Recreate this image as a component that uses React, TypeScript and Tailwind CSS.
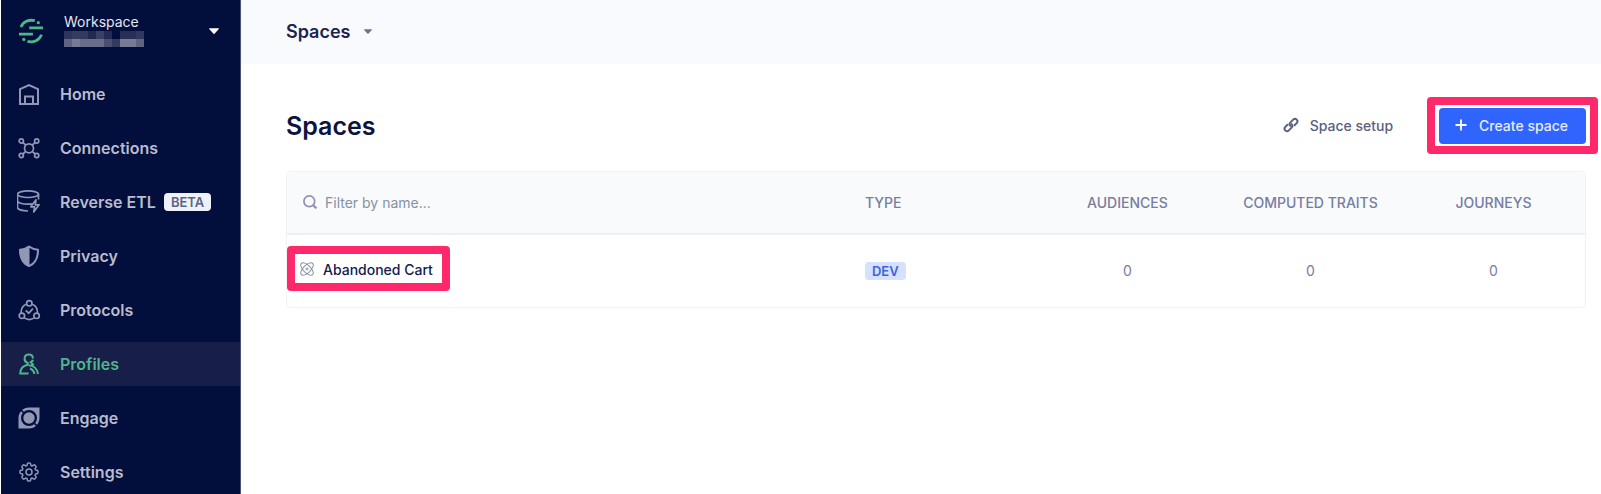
import type { ReactNode } from "react";
import { clsx } from "clsx";
import { HiOutlineCog8Tooth } from "react-icons/hi2";

type NavItem = {
  label: string;
  icon: ReactNode;
  badge?: string;
  active?: boolean;
};

const ICON_CLS = "size-6 shrink-0";

function NavIcon({ children }: { children: ReactNode }) {
  return (
    <svg
      viewBox="0 0 24 24"
      className={ICON_CLS}
      fill="none"
      stroke="currentColor"
      strokeWidth="1.7"
      aria-hidden="true"
    >
      {children}
    </svg>
  );
}

const NAV_ITEMS: NavItem[] = [
  {
    label: "Home",
    icon: (
      <NavIcon>
        <path strokeWidth="2" d="M3 22V7.200L12 3l9 4.200V22zM8 22v-7.500h8V22" />
      </NavIcon>
    ),
  },
  {
    label: "Connections",
    icon: (
      <NavIcon>
        <circle cx="12" cy="12.300" r="4.500" />
        <circle cx="4.300" cy="5" r="2.100" />
        <circle cx="19.700" cy="5" r="2.100" />
        <circle cx="4.300" cy="19.500" r="2.100" />
        <circle cx="19.700" cy="19.500" r="2.100" />
        <path d="M5.800 6.500l3.100 2.700M18.200 6.500l-3.100 2.700M5.800 18l3.100-2.600M18.200 18l-3.100-2.600" />
      </NavIcon>
    ),
  },
  {
    label: "Reverse ETL",
    badge: "BETA",
    icon: (
      <NavIcon>
        <ellipse cx="11" cy="4.200" rx="10.500" ry="3.300" />
        <path d="M.5 4.200v13.300c0 1.900 4.500 3.400 10.500 3.500M21.500 4.200v5.300M.5 10.800c0 1.900 4.700 3.400 10.500 3.400 1.600 0 3-.1 4.300-.4" />
        <path strokeLinejoin="round" d="M19 9.800l-5.200 7h3.800l-.9 5.200 5.400-7.200h-3.800z" />
      </NavIcon>
    ),
  },
  {
    label: "Privacy",
    icon: (
      <NavIcon>
        <path
          strokeWidth="2"
          strokeLinejoin="round"
          d="M12 2.500c2.600 1.900 5.500 3 9 3.200.1 8-2.600 13.800-9 16.500-6.400-2.700-9.100-8.500-9-16.500 3.500-.2 6.400-1.300 9-3.200z"
        />
        <path
          fill="currentColor"
          stroke="none"
          d="M12.500 2.500v19.700C5.600 19.500 2.900 13.700 3 5.700c3.500-.2 6.400-1.300 9.500-3.200z"
        />
      </NavIcon>
    ),
  },
  {
    label: "Protocols",
    icon: (
      <NavIcon>
        <circle cx="12.300" cy="5.300" r="2.700" />
        <circle cx="4.900" cy="17.800" r="2.700" />
        <circle cx="19.600" cy="17.800" r="2.700" />
        <path d="M9.600 6.200C6 7.300 4 10.800 4.100 15.100M15 6.200c3.600 1.100 5.600 4.600 5.500 8.900M7.100 19.900c3.300 2.100 7 2.100 10.300 0" />
        <path d="M8.700 12.400l3 2.800 4.200-4.600" />
      </NavIcon>
    ),
  },
  {
    label: "Profiles",
    active: true,
    icon: (
      <NavIcon>
        <path strokeWidth="2" d="M10.300 10.600C6.600 9.500 6.300 2.700 11.700 2.600c2.500 0 4.200 1.500 4.200 4" />
        <path strokeWidth="2" d="M11.600 21.400H3.300c.1-4.800 2.600-7.800 7.400-8.700V9.900" />
        <path strokeWidth="2" d="M12.600 10.400c1.800-.1 3-1.100 3.300-2.600M11.500 13.300c5 .2 8.800 3.400 9.500 8.700M13 16.500c2.400.8 3.900 2.700 4.400 5.500M14.100 11.400c1 .2 2 .9 2.500 1.900" />
      </NavIcon>
    ),
  },
  {
    label: "Engage",
    icon: (
      <NavIcon>
        <circle cx="12" cy="12" r="5.700" fill="currentColor" stroke="none" />
        <path
          fill="currentColor"
          stroke="none"
          fillRule="evenodd"
          d="M12 1.500h10.500V12c0 5.800-4.500 10.500-10.500 10.500H1.500V12C1.500 6.200 6.200 1.500 12 1.500zM12 4a8 8 0 1 0 0 16 8 8 0 0 0 0-16z"
        />
        <path stroke="#020e3c" strokeWidth="1.600" d="M4.200 4.200l2.400 2.400M17.400 17.400l2.400 2.400" />
      </NavIcon>
    ),
  },
  {
    label: "Settings",
    icon: <HiOutlineCog8Tooth className={ICON_CLS} aria-hidden="true" />,
  },
];

const SPACES = [
  { name: "Abandoned Cart", type: "DEV", audiences: 0, traits: 0, journeys: 0 },
];

/* Blurred-out workspace slug, two rows of blocks */
const MASK_ROWS = [
  ["#2e3559", "#363c60", "#343a5e", "#20294f", "#3a4064", "#232b52", "#020e3c", "#262f56", "#262f56", "#313961"],
  ["#5f6482", "#777b94", "#686d89", "#686d89", "#686d89", "#484f70", "#343b60", "#777b94", "#777b94", "#5f6482"],
];

function Logo() {
  return (
    <svg viewBox="0 0 26 26" className="size-[26px] shrink-0" fill="none" stroke="#4fb58b" strokeWidth="2.800" aria-hidden="true">
      <path d="M3 9C5 3.600 10.800 1.200 16.800 2.700" />
      <path d="M23.500 16.600c-2 5.700-8 8.300-14 6.800" />
      <path d="M11.200 9.800H25M1 16.200h13.900" />
      <circle cx="20.300" cy="4.700" r="1.600" fill="#4fb58b" stroke="none" />
      <circle cx="5.800" cy="21.400" r="1.600" fill="#4fb58b" stroke="none" />
    </svg>
  );
}

function Caret({ className }: { className: string }) {
  return (
    <svg viewBox="0 0 10 6" className={className} fill="currentColor" aria-hidden="true">
      <path d="M.6.300h8.800c.5 0 .7.500.4.800L5.500 5.700c-.3.300-.7.300-1 0L.2 1.100C-.1.800.100.300.600.300z" />
    </svg>
  );
}

function LinkIcon() {
  return (
    <svg viewBox="0 0 16 16" className="size-4" fill="none" stroke="currentColor" strokeWidth="2" strokeLinecap="round" aria-hidden="true">
      <path d="M7.400 8.900a2.500 2.500 0 0 1 0-3.500l2.800-2.800a2.500 2.500 0 0 1 3.500 0 2.500 2.500 0 0 1 0 3.500l-2.100 2.100" />
      <path d="M8.600 7.100a2.500 2.500 0 0 1 0 3.500l-2.800 2.800a2.500 2.500 0 0 1-3.500 0 2.500 2.500 0 0 1 0-3.500l2.100-2.100" />
    </svg>
  );
}

function SpaceIcon() {
  return (
    <svg viewBox="0 0 14 14" className="size-[14px] shrink-0 text-[#8590a3]" fill="none" stroke="currentColor" aria-hidden="true">
      <ellipse cx="7" cy="7" rx="8" ry="3.700" transform="rotate(45 7 7)" />
      <ellipse cx="7" cy="7" rx="8" ry="3.700" transform="rotate(-45 7 7)" />
      <circle cx="7" cy="7" r="1" />
    </svg>
  );
}

/** Pink frame drawn around whatever should catch the eye. */
function Highlight({ className }: { className: string }) {
  return (
    <span
      className={clsx("pointer-events-none absolute rounded-[4px] border-8 border-[#ff286b]", className)}
    />
  );
}

function Sidebar() {
  return (
    <aside className="w-60 shrink-0 bg-[#020e3c] border-r border-[#4a5376]">
      <button type="button" className="flex w-full h-[72px] items-start pt-[13px] pl-[17px] pr-[21px] text-left">
        <span className="pt-[5px]">
          <Logo />
        </span>
        <span className="flex-1 pl-5">
          <span className="block text-[14px] leading-[18px] text-[#e4e6ee]">Workspace</span>
          <svg viewBox="0 0 80 16" className="h-4 w-20" aria-hidden="true">
            {MASK_ROWS.map((row, y) =>
              row.map((fill, x) => (
                <rect key={`${x}-${y}`} x={x * 8} y={y * 8} width="8" height="8" fill={fill} />
              )),
            )}
          </svg>
        </span>
        <span className="pt-[15px]">
          <Caret className="h-[6px] w-[10px] text-white" />
        </span>
      </button>
      <nav className="flex flex-col gap-[10px]">
        {NAV_ITEMS.map((item) => (
          <a
            key={item.label}
            href="#"
            aria-current={item.active ? "page" : undefined}
            className={clsx(
              "flex h-11 items-center gap-[19px] pl-4 text-[16px] font-semibold",
              item.active ? "bg-[#171e47] text-[#4fb58b]" : "text-[#9297b6]",
            )}
          >
            {item.icon}
            <span className="flex items-center gap-2">
              <span className={item.active ? "text-[#4fb58b]" : "text-[#b9bccd]"}>{item.label}</span>
              {item.badge && (
                <span className="rounded-[4px] bg-[#eff1f8] px-[7px] text-[13px] leading-[18px] text-[#5c6485]">
                  {item.badge}
                </span>
              )}
            </span>
          </a>
        ))}
      </nav>
    </aside>
  );
}

function SpacesTable() {
  return (
    <div className="rounded-[4px] border border-[#f0f2f6]">
      <table className="w-full table-fixed text-[14px]">
        <thead>
          <tr className="h-[62px] border-b-2 border-[#edf0f5] bg-[#f9fafc] text-[#777e9f]">
            <th className="pb-px pl-4 text-left">
              <label className="flex items-center gap-2">
                <svg viewBox="0 0 14 14" className="size-[14px] shrink-0 text-[#8f90b5]" fill="none" stroke="currentColor" strokeWidth="1.700" aria-hidden="true">
                  <circle cx="6.300" cy="6.300" r="5.400" />
                  <path strokeWidth="2.200" d="M10 10.200l3.400 3.100" />
                </svg>
                <input
                  type="text"
                  aria-label="Filter by name"
                  placeholder="Filter by name..."
                  className="w-full bg-transparent font-normal outline-none placeholder:text-[#8592a3]"
                />
              </label>
            </th>
            <th className="w-[14.1%] pb-px pl-3 text-left font-medium">TYPE</th>
            <th className="w-[14.1%] pb-px font-medium">AUDIENCES</th>
            <th className="w-[14.1%] pb-px font-medium">COMPUTED TRAITS</th>
            <th className="w-[14.1%] pb-px font-medium">JOURNEYS</th>
          </tr>
        </thead>
        <tbody>
          {SPACES.map((space) => (
            <tr key={space.name} className="h-[73px] text-center text-[#777e9f]">
              <td className="pb-0.5 pl-[13px] text-left">
                <a href="#" className="relative inline-flex items-center gap-[9px] font-medium text-[#131c4e]">
                  <SpaceIcon />
                  {space.name}
                  <Highlight className="-left-[13px] -right-[17px] -top-[13px] -bottom-[11px]" />
                </a>
              </td>
              <td className="pb-0.5 pl-3 text-left">
                <span className="inline-block rounded-[4px] bg-[#d6e0ff] px-[7px] text-[13px] leading-[18px] font-semibold text-[#3f64d8]">
                  {space.type}
                </span>
              </td>
              <td className="pb-0.5">{space.audiences}</td>
              <td className="pb-0.5">{space.traits}</td>
              <td className="pb-0.5">{space.journeys}</td>
            </tr>
          ))}
        </tbody>
      </table>
    </div>
  );
}

export default function App() {
  return (
    <div className="flex min-h-screen bg-white pl-px font-['Inter',sans-serif]">
      <Sidebar />
      <div className="flex-1 min-w-0">
        <header className="flex h-16 items-center bg-[#f9fafe] pb-0.5 pl-[45px]">
          <button type="button" className="flex items-center gap-[14px] text-[18px] font-semibold text-[#1c2450]">
            Spaces
            <Caret className="h-[5px] w-2 text-[#6b7394]" />
          </button>
        </header>
        <main className="pt-11 pl-[45px] pr-[15px]">
          <div className="mb-[27px] flex h-9 items-center justify-between">
            <h1 className="pt-0.5 text-[25px] font-semibold text-[#0b1440]">Spaces</h1>
            <div className="flex items-center gap-[46px] text-[14px] font-medium">
              <a href="#" className="flex items-center gap-[11px] pb-0.5 text-[#596080]">
                <LinkIcon />
                Space setup
              </a>
              <button
                type="button"
                className="relative flex h-9 items-center gap-3 rounded-[4px] bg-[#2f64ff] pb-0.5 pl-4 pr-[18px] text-[#e6ecff]"
              >
                <svg viewBox="0 0 12 12" className="size-3" stroke="#fff" strokeWidth="1.800" aria-hidden="true">
                  <path d="M6 .5v11M.5 6h11" />
                </svg>
                Create space
                <Highlight className="-inset-x-3 -top-[11px] -bottom-[10px]" />
              </button>
            </div>
          </div>
          <SpacesTable />
        </main>
      </div>
    </div>
  );
}
